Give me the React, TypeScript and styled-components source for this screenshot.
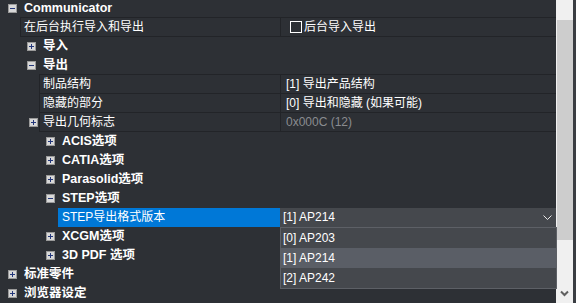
import React from 'react';
import styled, { createGlobalStyle } from 'styled-components';

const LINE = '#222428';
const BG = '#2d3035';

const Global = createGlobalStyle`
  html, body { margin: 0; padding: 0; background: ${BG}; overflow: hidden; }
  body { font-family: "Liberation Sans", "Noto Sans CJK SC", sans-serif; }
`;

const Frame = styled.div`
  display: flex;
  width: 576px;
  height: 303px;
  overflow: hidden;
  background: ${BG};
`;

const Tree = styled.div`
  flex: 1;
  min-width: 0;
  display: flex;
  flex-direction: column;
  margin-top: -1px;
`;

const CatRow = styled.div<{ $indent: number }>`
  height: 19px;
  flex-shrink: 0;
  display: flex;
  align-items: center;
  padding-left: ${(p) => p.$indent}px;
`;

const ExpSlot = styled.span`
  width: 24px;
  height: 19px;
  flex-shrink: 0;
  box-sizing: border-box;
  padding-left: 8px;
  display: flex;
  align-items: center;
`;

const CatLabel = styled.span`
  color: #ffffff;
  font-weight: bold;
  font-size: 12.5px;
  line-height: 19px;
  white-space: nowrap;
`;

const PropRow = styled.div<{ $gutter: number }>`
  height: 19px;
  flex-shrink: 0;
  display: grid;
  grid-template-columns: ${(p) => p.$gutter}px ${(p) => 280 - p.$gutter}px 1fr;
`;

const Gutter = styled.div<{ $pad: number }>`
  display: flex;
  align-items: center;
  padding-left: ${(p) => p.$pad}px;
`;

const LabelCell = styled.div<{ $selected?: boolean }>`
  box-sizing: border-box;
  border-left: 1px solid ${(p) => (p.$selected ? '#0078d7' : LINE)};
  border-bottom: 1px solid ${(p) => (p.$selected ? '#0078d7' : LINE)};
  box-shadow: ${(p) => (p.$selected ? 'none' : `0 -1px 0 ${LINE}`)};
  background: ${(p) => (p.$selected ? '#0078d7' : 'transparent')};
  padding-left: 3px;
  color: #ffffff;
  font-size: 12px;
  line-height: 18px;
  white-space: nowrap;
  overflow: hidden;
`;

const ValueCell = styled.div<{ $muted?: boolean }>`
  box-sizing: border-box;
  border-left: 1px solid ${LINE};
  border-bottom: 1px solid ${LINE};
  box-shadow: 0 -1px 0 ${LINE};
  padding-left: 5px;
  color: ${(p) => (p.$muted ? '#8a8c90' : '#ffffff')};
  font-size: 12px;
  line-height: 18px;
  white-space: nowrap;
  overflow: hidden;
  display: flex;
  align-items: center;
`;

const ComboCell = styled.div`
  position: relative;
  box-sizing: border-box;
  border-left: 1px solid #45484d;
  background: #45484d;
  padding: 0 4px 0 2px;
  color: #ffffff;
  font-size: 12px;
  line-height: 19px;
  white-space: nowrap;
  display: flex;
  align-items: center;
  justify-content: space-between;
`;

const DropList = styled.div`
  position: absolute;
  top: 100%;
  left: -1px;
  width: calc(100% + 2px);
  box-sizing: border-box;
  border: 1px solid #5d6066;
  background: #45484d;
  display: flex;
  flex-direction: column;
  z-index: 2;
`;

const DropItem = styled.div<{ $hot?: boolean }>`
  height: 20px;
  line-height: 20px;
  padding-left: 2px;
  font-size: 12px;
  color: #ffffff;
  background: ${(p) => (p.$hot ? '#5a5e66' : '#45484d')};
`;

const CheckBox = styled.span`
  width: 12px;
  height: 12px;
  box-sizing: border-box;
  border: 1px solid #ffffff;
  margin: 0 2px 0 4px;
  flex-shrink: 0;
`;

const ScrollBar = styled.div`
  width: 17px;
  flex-shrink: 0;
  background: #f0f0f0;
  display: flex;
  flex-direction: column;
`;

const ScrollArrow = styled.div`
  height: 20px;
  flex-shrink: 0;
  display: flex;
  align-items: center;
  justify-content: center;
`;

const Track = styled.div`
  flex: 1;
  display: flex;
  flex-direction: column;
`;

const Thumb = styled.div`
  height: 220px;
  margin-left: 1px;
  background: #cdcdcd;
`;

const Edge = styled.div`
  width: 3px;
  flex-shrink: 0;
  background: #3a3d42;
`;

const Expander = ({ open }: { open: boolean }) => (
  <svg width="9" height="9" viewBox="0 0 9 9">
    <rect x="0.5" y="0.5" width="8" height="8" fill="#d8d8d8" stroke="#9a9a9a" />
    <path d="M2 4.5h5" stroke="#22367a" />
    {!open && <path d="M4.5 2v5" stroke="#22367a" />}
  </svg>
);

const Chevron = () => (
  <svg width="9" height="6" viewBox="0 0 9 6">
    <path d="M0.5 0.5L4.5 4.5L8.5 0.5" fill="none" stroke="#e8e8e8" strokeWidth="1" />
  </svg>
);

const ScrollDown = () => (
  <svg width="9" height="7" viewBox="0 0 9 7">
    <path d="M1 1.5L4.5 5L8 1.5" fill="none" stroke="#606060" strokeWidth="2" />
  </svg>
);

type Cat = { kind: 'cat'; level: number; label: string; open: boolean };
type Prop = {
  kind: 'prop';
  level: number;
  label: string;
  value?: string;
  muted?: boolean;
  checkbox?: boolean;
  expander?: boolean;
  selected?: boolean;
};
type Node = Cat | Prop;

const nodes: Node[] = [
  { kind: 'cat', level: 0, label: 'Communicator', open: true },
  { kind: 'prop', level: 0, label: '在后台执行导入和导出', value: '后台导入导出', checkbox: true },
  { kind: 'cat', level: 1, label: '导入', open: false },
  { kind: 'cat', level: 1, label: '导出', open: true },
  { kind: 'prop', level: 1, label: '制品结构', value: '[1] 导出产品结构' },
  { kind: 'prop', level: 1, label: '隐藏的部分', value: '[0] 导出和隐藏 (如果可能)' },
  { kind: 'prop', level: 1, label: '导出几何标志', value: '0x000C (12)', muted: true, expander: true },
  { kind: 'cat', level: 2, label: 'ACIS选项', open: false },
  { kind: 'cat', level: 2, label: 'CATIA选项', open: false },
  { kind: 'cat', level: 2, label: 'Parasolid选项', open: false },
  { kind: 'cat', level: 2, label: 'STEP选项', open: true },
  { kind: 'prop', level: 2, label: 'STEP导出格式版本', value: '[1] AP214', selected: true },
  { kind: 'cat', level: 2, label: 'XCGM选项', open: false },
  { kind: 'cat', level: 2, label: '3D PDF 选项', open: false },
  { kind: 'cat', level: 0, label: '标准零件', open: false },
  { kind: 'cat', level: 0, label: '浏览器设定', open: false },
];

const options = ['[0] AP203', '[1] AP214', '[2] AP242'];

export default function App() {
  return (
    <>
      <Global />
      <Frame>
        <Tree>
          {nodes.map((n, i) => {
            const indent = n.level * 19;
            if (n.kind === 'cat') {
              return (
                <CatRow key={i} $indent={indent}>
                  <ExpSlot>
                    <Expander open={n.open} />
                  </ExpSlot>
                  <CatLabel>{n.label}</CatLabel>
                </CatRow>
              );
            }
            const gutter = indent + 20;
            return (
              <PropRow key={i} $gutter={gutter}>
                <Gutter $pad={indent + 10}>{n.expander && <Expander open={false} />}</Gutter>
                <LabelCell $selected={n.selected}>{n.label}</LabelCell>
                {n.selected ? (
                  <ComboCell>
                    <span>{n.value}</span>
                    <Chevron />
                    <DropList>
                      {options.map((o) => (
                        <DropItem key={o} $hot={o === n.value}>
                          {o}
                        </DropItem>
                      ))}
                    </DropList>
                  </ComboCell>
                ) : (
                  <ValueCell $muted={n.muted}>
                    {n.checkbox && <CheckBox />}
                    {n.value}
                  </ValueCell>
                )}
              </PropRow>
            );
          })}
        </Tree>
        <ScrollBar>
          <ScrollArrow />
          <Track>
            <Thumb />
          </Track>
          <ScrollArrow>
            <ScrollDown />
          </ScrollArrow>
        </ScrollBar>
        <Edge />
      </Frame>
    </>
  );
}
